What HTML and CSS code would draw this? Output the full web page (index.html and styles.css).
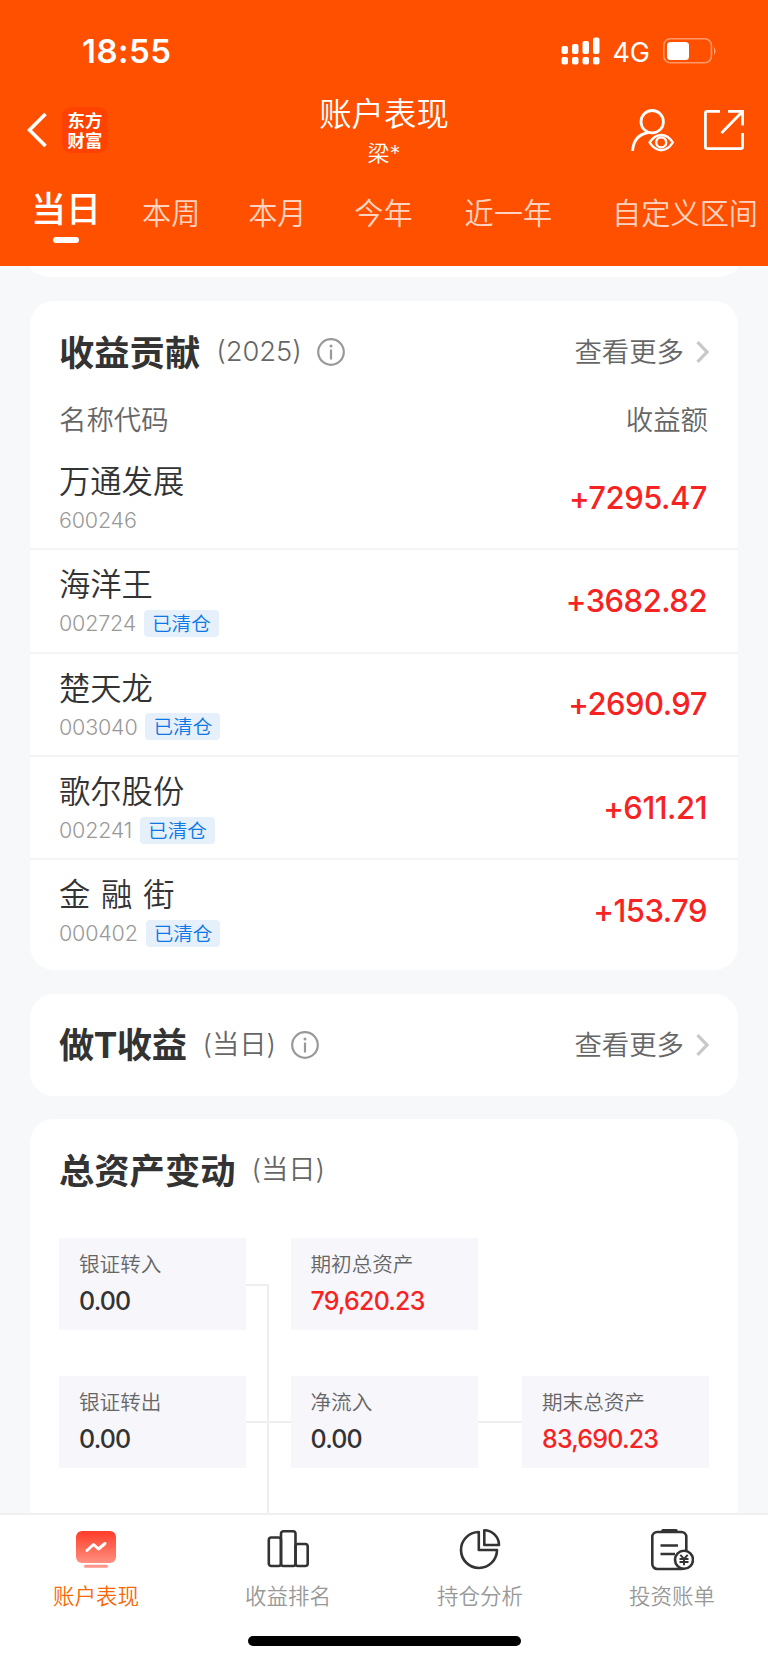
FILE: index.html
```html
<!DOCTYPE html>
<html lang="zh-CN">
  <head>
    <meta charset="UTF-8">
    <title>账户表现</title>
    <link rel="stylesheet" href="styles.css">
  </head>
  <body>
    <header class="header">
      <!-- status bar -->
      <div class="status-bar">
        <div class="time">18:55</div>
        <div class="status-right">
          <svg class="signal" width="40" height="28" viewBox="0 0 40 28" fill="#fff">
            <rect x="0.5" y="9" width="6.5" height="8" rx="2"/>
            <rect x="11" y="7" width="6.5" height="10" rx="2"/>
            <rect x="21.5" y="4" width="6.5" height="13" rx="2"/>
            <rect x="32" y="0.5" width="6.5" height="16.5" rx="2"/>
            <rect x="0.5" y="20" width="6.5" height="7.5" rx="2"/>
            <rect x="11" y="20" width="6.5" height="7.5" rx="2"/>
            <rect x="21.5" y="20" width="6.5" height="7.5" rx="2"/>
            <rect x="32" y="20" width="6.5" height="7.5" rx="2"/>
          </svg>
          <span class="network">4G</span>
          <svg class="battery" width="54" height="26" viewBox="0 0 54 26">
            <rect x="0.8" y="0.8" width="47.6" height="24" rx="6.5" fill="none" stroke="#fff" stroke-opacity="0.42" stroke-width="1.6"/>
            <rect x="4" y="4" width="22" height="18" rx="3.5" fill="#fff"/>
            <path d="M51 9 Q54 13 51 17 Z" fill="#fff" fill-opacity="0.5"/>
          </svg>
        </div>
      </div>
      <!-- title bar -->
      <div class="title-bar">
        <div class="title-left">
          <svg width="20" height="36" viewBox="0 0 20 36" fill="none" stroke="#fff" stroke-width="3.6">
            <path d="M18.5 2 L2.5 18 L18.5 34"/>
          </svg>
          <div class="logo">东方<br>财富</div>
        </div>
        <div class="title-center">
          <div class="title">账户表现</div>
          <div class="user-name">梁*</div>
        </div>
        <div class="title-right">
          <svg width="43" height="43" viewBox="0 0 43 43" fill="none" stroke="#fff" stroke-width="2.8">
            <circle cx="21.2" cy="12.7" r="11.2"/>
            <path d="M1.6 42 C2.3 31 8.5 25 17.5 23.5"/>
            <path d="M18.6 33.4 Q23.5 26 30.2 26 Q37 26 41.8 33.4 Q37 41.2 30.2 41.2 Q23.5 41.2 18.6 33.4 Z" stroke-width="2.4"/>
            <circle cx="30.2" cy="33.4" r="5" stroke-width="2.4"/>
          </svg>
          <svg width="40" height="40" viewBox="0 0 40 40" fill="none" stroke="#fff" stroke-width="2.8">
            <path d="M16 1.4 H3.2 Q1.4 1.4 1.4 3.2 V36.8 Q1.4 38.6 3.2 38.6 H36.8 Q38.6 38.6 38.6 36.8 V23"/>
            <path d="M24 1.4 H38.6 V15.5 M38 2 L17.5 23"/>
          </svg>
        </div>
      </div>
      <!-- period tabs -->
      <nav class="tabs">
        <div class="tab active">当日</div>
        <div class="tab">本周</div>
        <div class="tab">本月</div>
        <div class="tab">今年</div>
        <div class="tab year">近一年</div>
        <div class="tab custom">自定义区间</div>
      </nav>
    </header>

    <main class="content">
      <div class="card card-prev"></div>

      <!-- profit contribution -->
      <section class="card card-profit">
        <div class="card-head">
          <h2>收益贡献</h2>
          <span class="period">(2025)</span>
          <svg class="info" width="28" height="28" viewBox="0 0 28 28" fill="none" stroke="#999" stroke-width="2.2">
            <circle cx="14" cy="14" r="12.8"/>
            <path d="M14 11.5 V21.5"/>
            <circle cx="14" cy="8" r="1.5" fill="#999" stroke="none"/>
          </svg>
          <a class="more"><span>查看更多</span>
            <svg width="13" height="22" viewBox="0 0 13 22" fill="none" stroke="#c8c8c8" stroke-width="3.2">
              <path d="M1.5 1.2 L11 11 L1.5 20.8"/>
            </svg>
          </a>
        </div>
        <div class="list-head">
          <span>名称代码</span>
          <span>收益额</span>
        </div>
        <div class="stock">
          <div class="stock-info">
            <div class="stock-name">万通发展</div>
            <div class="stock-code">600246</div>
          </div>
          <div class="amount">+7295.47</div>
        </div>
        <div class="stock">
          <div class="stock-info">
            <div class="stock-name">海洋王</div>
            <div class="stock-code">002724<span class="tag">已清仓</span></div>
          </div>
          <div class="amount">+3682.82</div>
        </div>
        <div class="stock">
          <div class="stock-info">
            <div class="stock-name">楚天龙</div>
            <div class="stock-code">003040<span class="tag">已清仓</span></div>
          </div>
          <div class="amount">+2690.97</div>
        </div>
        <div class="stock">
          <div class="stock-info">
            <div class="stock-name">歌尔股份</div>
            <div class="stock-code">002241<span class="tag">已清仓</span></div>
          </div>
          <div class="amount">+611.21</div>
        </div>
        <div class="stock">
          <div class="stock-info">
            <div class="stock-name spaced">金 融 街</div>
            <div class="stock-code">000402<span class="tag">已清仓</span></div>
          </div>
          <div class="amount">+153.79</div>
        </div>
      </section>

      <!-- T trading profit -->
      <section class="card card-t">
        <div class="card-head">
          <h2>做T收益</h2>
          <span class="period">(当日)</span>
          <svg class="info" width="28" height="28" viewBox="0 0 28 28" fill="none" stroke="#999" stroke-width="2.2">
            <circle cx="14" cy="14" r="12.8"/>
            <path d="M14 11.5 V21.5"/>
            <circle cx="14" cy="8" r="1.5" fill="#999" stroke="none"/>
          </svg>
          <a class="more"><span>查看更多</span>
            <svg width="13" height="22" viewBox="0 0 13 22" fill="none" stroke="#c8c8c8" stroke-width="3.2">
              <path d="M1.5 1.2 L11 11 L1.5 20.8"/>
            </svg>
          </a>
        </div>
      </section>

      <!-- total assets change -->
      <section class="card card-assets">
        <div class="card-head">
          <h2>总资产变动</h2>
          <span class="period">(当日)</span>
        </div>
        <div class="flow">
          <div class="flow-box first">
            <div class="flow-label">银证转入</div>
            <div class="flow-value">0.00</div>
          </div>
          <div class="flow-box">
            <div class="flow-label">期初总资产</div>
            <div class="flow-value red">79,620.23</div>
          </div>
          <div class="flow-box row-start linked">
            <div class="flow-label">银证转出</div>
            <div class="flow-value">0.00</div>
          </div>
          <div class="flow-box linked">
            <div class="flow-label">净流入</div>
            <div class="flow-value">0.00</div>
          </div>
          <div class="flow-box">
            <div class="flow-label">期末总资产</div>
            <div class="flow-value red">83,690.23</div>
          </div>
        </div>
      </section>
    </main>

    <!-- bottom navigation -->
    <footer class="bottom">
      <nav class="bottom-nav">
        <div class="nav-item active">
          <svg width="44" height="44" viewBox="0 0 44 44">
            <defs>
              <linearGradient id="screen" x1="0" y1="0" x2="0" y2="1">
                <stop offset="0" stop-color="#ff3c28"/>
                <stop offset="1" stop-color="#ff9080"/>
              </linearGradient>
            </defs>
            <rect x="2" y="3" width="40" height="32" rx="6" fill="url(#screen)"/>
            <path d="M13 22.5 L19.5 16.5 L24.5 21 L31 15.5" fill="none" stroke="#fff" stroke-width="3" stroke-linecap="round" stroke-linejoin="round"/>
            <rect x="10" y="36.8" width="24" height="3" rx="1.5" fill="#ff9688"/>
          </svg>
          <span>账户表现</span>
        </div>
        <div class="nav-item">
          <svg width="44" height="44" viewBox="0 0 44 44" fill="none" stroke="#333" stroke-width="2.6">
            <rect x="2.8" y="9.5" width="12.2" height="28.5" rx="2.5"/>
            <rect x="15" y="3.3" width="14.5" height="34.7" rx="2.5"/>
            <rect x="29.5" y="16" width="12.2" height="22" rx="2.5"/>
          </svg>
          <span>收益排名</span>
        </div>
        <div class="nav-item">
          <svg width="44" height="44" viewBox="0 0 44 44" fill="none" stroke="#333" stroke-width="2.6" stroke-linejoin="round">
            <path d="M20.8 4 A18 18 0 1 0 39 22 H20.8 Z"/>
            <path d="M26.3 2.3 V17 H41 A14.8 14.8 0 0 0 26.3 2.3 Z"/>
          </svg>
          <span>持仓分析</span>
        </div>
        <div class="nav-item">
          <svg width="44" height="44" viewBox="0 0 44 44" fill="none" stroke="#333" stroke-width="2.6">
            <rect x="2.3" y="4" width="34" height="37" rx="5"/>
            <path d="M13 2.8 H26" stroke-width="3.6" stroke-linecap="round"/>
            <path d="M10.5 17.5 H28 M10.5 26 H25"/>
            <circle cx="34" cy="31.8" r="9" fill="#fff"/>
            <path d="M30.3 26.8 L34 31 L37.7 26.8 M34 31 V37.2 M29.5 31 H38.5 M29.5 34 H38.5" stroke-width="1.9"/>
          </svg>
          <span>投资账单</span>
        </div>
      </nav>
      <div class="home-indicator"></div>
    </footer>
  </body>
</html>
```
FILE: styles.css
```css
* {
  box-sizing: border-box;
}
body {
  display: flex;
  flex-direction: column;
  margin: 0;
  width: 768px;
  height: 1663px;
  overflow: hidden;
  background-color: #f7f8fa;
  font-family: Inter, "Noto Sans CJK SC", sans-serif;
  font-weight: 350;
  color: #333;
}
svg {
  display: block;
  flex-shrink: 0;
}

/* Header */
.header {
  height: 266px;
  background-color: #ff5000;
  color: white;
}
.status-bar {
  display: flex;
  justify-content: space-between;
  height: 86px;
  padding: 37px 51px 0 82px;
}
.time {
  font-size: 33px;
  line-height: 29px;
  font-weight: 600;
  letter-spacing: 0.5px;
}
.status-right {
  display: flex;
  align-items: flex-start;
}
.network {
  margin-left: 11px;
  margin-right: 13px;
  font-size: 27px;
  line-height: 31px;
  font-weight: 400;
}
.battery {
  margin-top: 1px;
}
.title-bar {
  display: grid;
  grid-template-columns: 1fr 200px 1fr;
  height: 88px;
  padding: 0 24px 0 27px;
}
.title-left {
  display: flex;
  align-items: center;
  gap: 15px;
}
.logo {
  width: 46px;
  height: 46px;
  padding-top: 4px;
  border-radius: 9px;
  background-color: #ff4200;
  text-align: center;
  font-size: 17.4px;
  line-height: 19.5px;
  font-weight: 700;
}
.title-center {
  margin-left: -3px;
  text-align: center;
}
.title {
  font-size: 32.4px;
  line-height: 40px;
  padding-top: 9px;
}
.user-name {
  font-size: 22px;
  line-height: 30px;
  margin-top: 3px;
}
.title-right {
  display: flex;
  justify-content: flex-end;
  align-items: center;
  gap: 30px;
}
.tabs {
  display: flex;
  padding-left: 31px;
  white-space: nowrap;
}
.tab {
  margin-right: 47.8px;
  padding-top: 19px;
  font-size: 29.2px;
  line-height: 41px;
  color: #ffd3c0;
}
.tab.active {
  width: 70px;
  margin-right: 41px;
  padding-top: 15px;
  font-size: 35px;
  line-height: 40px;
  font-weight: 500;
  color: white;
}
.tab.active::after {
  content: "";
  display: block;
  width: 26px;
  height: 6px;
  margin: 8px auto 0;
  border-radius: 3px;
  background-color: white;
}
.tab.year {
  margin-left: 4px;
  margin-right: 60px;
}
.tab.custom {
  margin-right: 0;
}

/* Cards */
.content {
  flex: 1;
  overflow: hidden;
  padding: 0 30px;
}
.card {
  margin-bottom: 23px;
  border-radius: 24px;
  background-color: white;
}
.card-prev {
  height: 11px;
  margin-bottom: 24px;
  border-radius: 0 0 24px 24px / 0 0 11px 11px;
}
.card-profit {
  height: 668.5px;
  margin-bottom: 24px;
}
.card-t {
  height: 102.5px;
}
.card-assets {
  height: 560px;
}
.card-head {
  display: flex;
  align-items: center;
  height: 102px;
  padding: 0 29px;
}
.card-head h2 {
  margin: -4px 0 0;
  font-size: 35.3px;
  font-weight: 700;
}
.card-t h2 {
  letter-spacing: -0.5px;
}
.period {
  margin-left: 16px;
  font-size: 27.3px;
  line-height: 40px;
  color: #666;
}
.info {
  margin-left: 15px;
}
.more {
  display: flex;
  align-items: center;
  gap: 12px;
  margin-left: auto;
  font-size: 27.4px;
  line-height: 40px;
  color: #666;
}
.list-head {
  display: flex;
  justify-content: space-between;
  height: 44px;
  padding: 1px 30px 0 29px;
  font-size: 27.4px;
  line-height: 32px;
  color: #666;
}
.stock {
  display: flex;
  justify-content: space-between;
  align-items: center;
  height: 103.3px;
  padding: 0 31px 0 29px;
  border-bottom: 2px solid #f4f4f5;
}
.stock:last-child {
  height: 101px;
  border-bottom: none;
}
.stock-info {
  padding-top: 3px;
}
.stock-name {
  font-size: 31.3px;
  line-height: 42px;
}
.stock-name.spaced {
  word-spacing: 2px;
}
.stock-code {
  display: flex;
  align-items: center;
  height: 34px;
  font-size: 21.5px;
  letter-spacing: -0.2px;
  color: #999;
}
.tag {
  height: 27px;
  margin-left: 8px;
  padding: 0 8px;
  border-radius: 4px;
  background-color: #e6f0fb;
  color: #0b78e6;
  font-size: 19.6px;
  line-height: 28px;
  letter-spacing: 0;
}
.amount {
  font-size: 31px;
  line-height: 38px;
  font-weight: 500;
  letter-spacing: -0.5px;
  color: #f72323;
}

/* Assets flow */
.flow {
  position: relative;
  display: grid;
  grid-template-columns: 187px 187px 187px;
  grid-auto-rows: 92px;
  gap: 46px 44.5px;
  margin-top: 17px;
  padding-left: 29px;
}
.flow::before {
  content: "";
  position: absolute;
  left: 216px;
  top: 46px;
  width: 21px;
  height: 400px;
  border-top: 2px solid #eee;
  border-right: 2px solid #eee;
}
.flow-box {
  position: relative;
  padding: 11px 20px;
  background-color: #f6f6fb;
}
.flow-box.row-start {
  grid-column: 1;
}
.flow-box.linked::after {
  content: "";
  position: absolute;
  left: 187px;
  top: 45px;
  width: 44.5px;
  height: 2px;
  background-color: #eee;
}
.flow-label {
  font-size: 20.6px;
  line-height: 32px;
  color: #666;
}
.flow-value {
  font-size: 25px;
  line-height: 41px;
  font-weight: 500;
  letter-spacing: -0.8px;
}
.flow-value.red {
  color: #f72323;
}

/* Bottom navigation */
.bottom {
  height: 150px;
  border-top: 2px solid #eeeff0;
  background-color: white;
}
.bottom-nav {
  display: flex;
  height: 121px;
}
.nav-item {
  display: flex;
  flex-direction: column;
  align-items: center;
  width: 25%;
  padding-top: 13px;
  font-size: 21.5px;
  line-height: 30px;
  color: #999;
}
.nav-item span {
  margin-top: 9px;
}
.nav-item.active {
  color: #f76707;
}
.home-indicator {
  width: 273px;
  height: 10px;
  margin: 0 auto;
  border-radius: 5px;
  background-color: black;
}
```
